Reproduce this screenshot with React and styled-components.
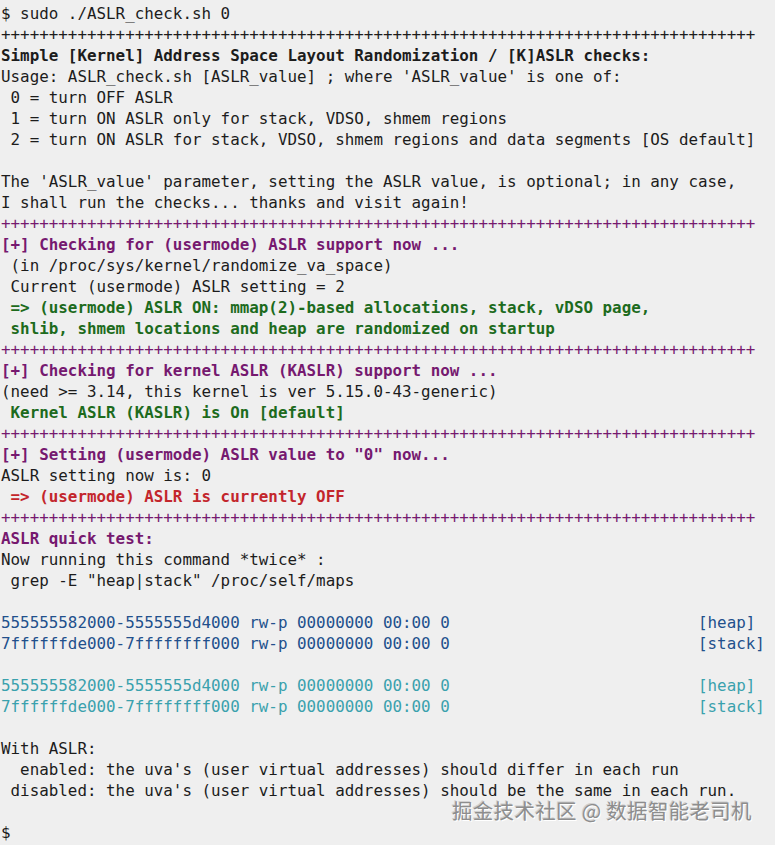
import React from "react";
import styled, { createGlobalStyle } from "styled-components";

const GlobalStyle = createGlobalStyle`
  html, body {
    margin: 0;
    padding: 0;
    background: #efefef;
  }
`;

const COLORS = {
  text: "#1c1c1c",
  purple: "#76196f",
  green: "#1d6b1d",
  red: "#c3262c",
  blue: "#22508c",
  cyan: "#3aa1ad",
};

const Terminal = styled.div`
  position: relative;
  width: 775px;
  height: 845px;
  box-sizing: border-box;
  padding: 3px 0 0 1px;
  background: #efefef;
  font-family: "DejaVu Sans Mono", monospace;
  font-size: 15.86px;
  line-height: 21px;
  overflow: hidden;
`;

const Line = styled.div`
  white-space: pre;
  height: 21px;
  color: ${(p) => COLORS[p.$tone || "text"]};
  font-weight: ${(p) => (p.$bold ? "bold" : "normal")};
`;

const Watermark = styled.div`
  position: absolute;
  left: 452px;
  top: 800px;
  font-family: "Noto Sans CJK SC", sans-serif;
  font-size: 20.5px;
  letter-spacing: 0.3px;
  color: #8d8d8d;
  text-shadow: 1px 1px 0 #ffffff, -1px -1px 0 #d0d0d0;
`;

const SEP = "+".repeat(79);
const MAP_PAD = (s) => s.padEnd(73, " ");

const lines = [
  { t: "$ sudo ./ASLR_check.sh 0" },
  { t: SEP },
  { t: "Simple [Kernel] Address Space Layout Randomization / [K]ASLR checks:", bold: true },
  { t: "Usage: ASLR_check.sh [ASLR_value] ; where 'ASLR_value' is one of:" },
  { t: " 0 = turn OFF ASLR" },
  { t: " 1 = turn ON ASLR only for stack, VDSO, shmem regions" },
  { t: " 2 = turn ON ASLR for stack, VDSO, shmem regions and data segments [OS default]" },
  { t: "" },
  { t: "The 'ASLR_value' parameter, setting the ASLR value, is optional; in any case," },
  { t: "I shall run the checks... thanks and visit again!" },
  { t: SEP, tone: "purple" },
  { t: "[+] Checking for (usermode) ASLR support now ...", tone: "purple", bold: true },
  { t: " (in /proc/sys/kernel/randomize_va_space)" },
  { t: " Current (usermode) ASLR setting = 2" },
  { t: " => (usermode) ASLR ON: mmap(2)-based allocations, stack, vDSO page,", tone: "green", bold: true },
  { t: " shlib, shmem locations and heap are randomized on startup", tone: "green", bold: true },
  { t: SEP, tone: "purple" },
  { t: "[+] Checking for kernel ASLR (KASLR) support now ...", tone: "purple", bold: true },
  { t: "(need >= 3.14, this kernel is ver 5.15.0-43-generic)" },
  { t: " Kernel ASLR (KASLR) is On [default]", tone: "green", bold: true },
  { t: SEP, tone: "purple" },
  { t: "[+] Setting (usermode) ASLR value to \"0\" now...", tone: "purple", bold: true },
  { t: "ASLR setting now is: 0" },
  { t: " => (usermode) ASLR is currently OFF", tone: "red", bold: true },
  { t: SEP, tone: "purple" },
  { t: "ASLR quick test:", tone: "purple", bold: true },
  { t: "Now running this command *twice* :" },
  { t: " grep -E \"heap|stack\" /proc/self/maps" },
  { t: "" },
  { t: MAP_PAD("555555582000-5555555d4000 rw-p 00000000 00:00 0") + "[heap]", tone: "blue" },
  { t: MAP_PAD("7ffffffde000-7ffffffff000 rw-p 00000000 00:00 0") + "[stack]", tone: "blue" },
  { t: "" },
  { t: MAP_PAD("555555582000-5555555d4000 rw-p 00000000 00:00 0") + "[heap]", tone: "cyan" },
  { t: MAP_PAD("7ffffffde000-7ffffffff000 rw-p 00000000 00:00 0") + "[stack]", tone: "cyan" },
  { t: "" },
  { t: "With ASLR:" },
  { t: "  enabled: the uva's (user virtual addresses) should differ in each run" },
  { t: " disabled: the uva's (user virtual addresses) should be the same in each run." },
  { t: "" },
  { t: "$" },
];

export default function App() {
  return (
    <>
      <GlobalStyle />
      <Terminal>
        {lines.map((l, i) => (
          <Line key={i} $tone={l.tone} $bold={l.bold}>
            {l.t || " "}
          </Line>
        ))}
        <Watermark>掘金技术社区 @ 数据智能老司机</Watermark>
      </Terminal>
    </>
  );
}
